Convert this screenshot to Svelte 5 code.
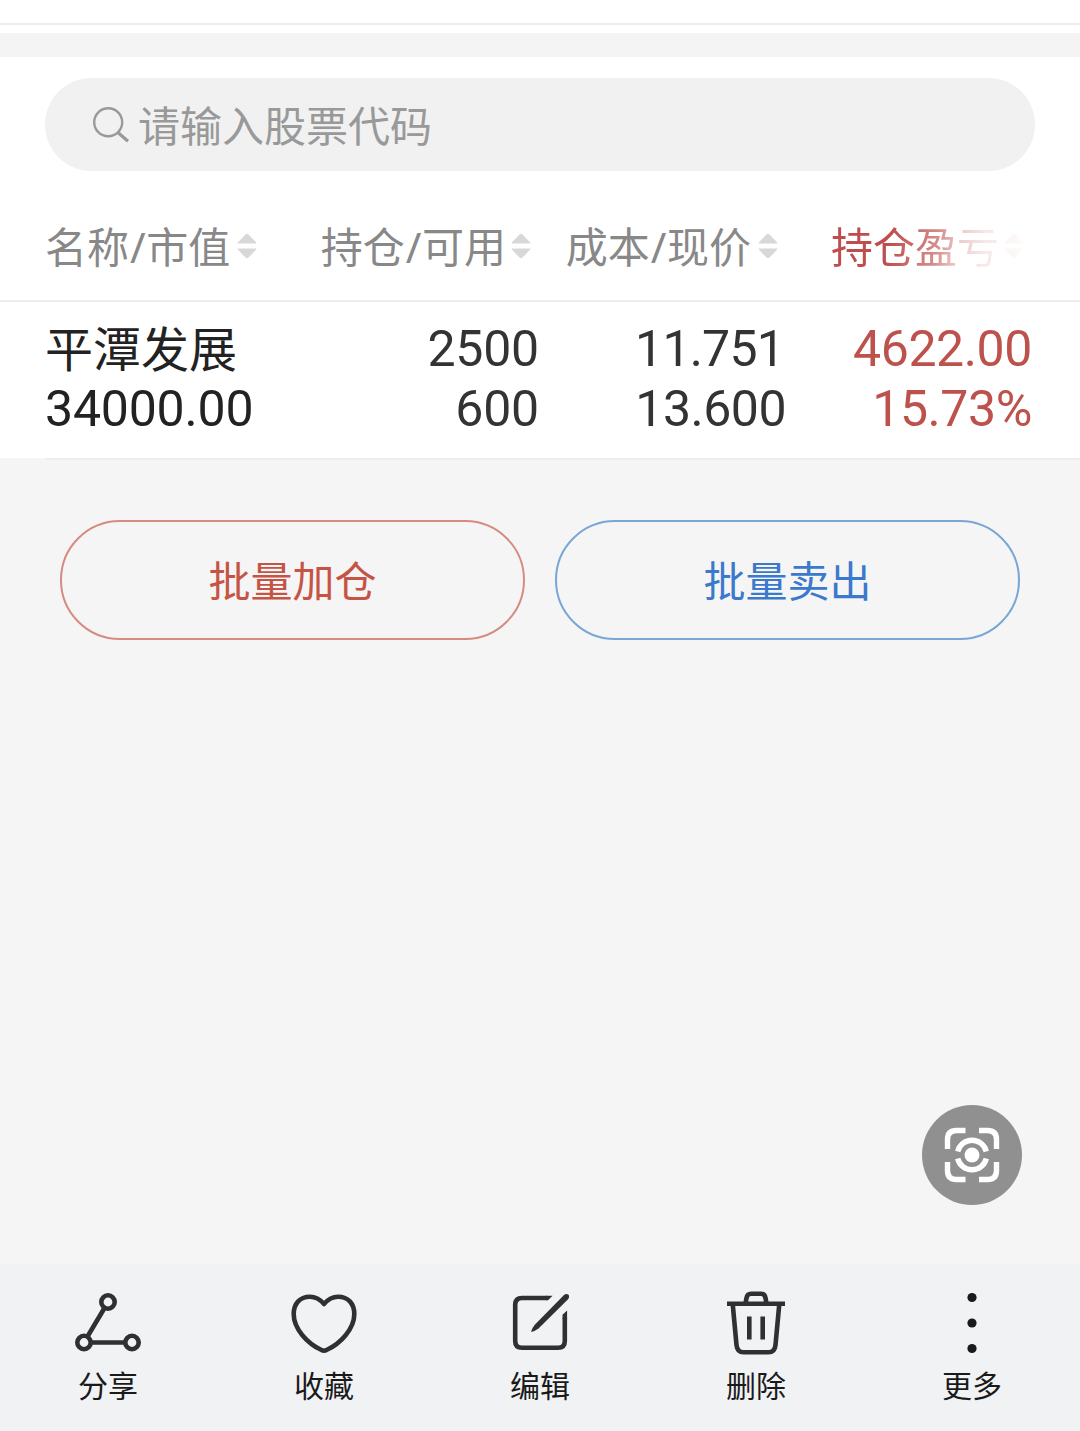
<script>
  const columns = [
    { label: ['名称', '市值'], values: ['平潭发展', '34000.00'], kind: 'name' },
    { label: ['持仓', '可用'], values: ['2500', '600'], kind: 'num' },
    { label: ['成本', '现价'], values: ['11.751', '13.600'], kind: 'num price' },
    { label: ['持仓盈亏'], values: ['4622.00', '15.73%'], kind: 'num profit' }
  ];
  const actions = [
    { id: 'share', label: '分享' },
    { id: 'like', label: '收藏' },
    { id: 'edit', label: '编辑' },
    { id: 'delete', label: '删除' },
    { id: 'more', label: '更多' }
  ];
</script>

<main>
  <div class="top"></div>
  <div class="gap"></div>

  <section class="holdings">
    <div class="search">
      <svg width="40" height="40" viewBox="0 0 40 40" fill="none" stroke="#999" stroke-width="2.4">
        <circle cx="17.2" cy="17.3" r="14" />
        <path d="M27.5 28l9.500 8.300" stroke-width="3.2" />
      </svg>
      <span>请输入股票代码</span>
    </div>

    <div class="grid head">
      {#each columns as col}
        <div class="cell {col.kind}">
          <span class="label">{col.label[0]}{#if col.label[1]}<span class="slash">/</span>{col.label[1]}{/if}</span>
          <svg class="sort" width="20" height="26" viewBox="0 0 20 26" fill="#d8d8d8">
            <path d="M1 10.5Q0 10.2 1 9.2L8.500 1.400Q10 0 11.500 1.400L19 9.200Q20 10.200 19 10.500Z" />
            <path d="M1 15.500Q0 15.800 1 16.800L8.500 24.600Q10 26 11.500 24.600L19 16.800Q20 15.800 19 15.500Z" />
          </svg>
        </div>
      {/each}
    </div>

    <div class="grid row">
      {#each columns as col}
        <div class="cell {col.kind}">
          {#each col.values as v}
            <div class="value">{v}</div>
          {/each}
        </div>
      {/each}
    </div>
  </section>
  <div class="divider"></div>

  <section class="batch">
    <button class="buy">批量加仓</button>
    <button class="sell">批量卖出</button>
  </section>

  <div class="fab">
    <svg width="100" height="100" viewBox="0 0 100 100" fill="none" stroke="#fff" stroke-width="5.400">
      <path d="M25.500 44V34.500Q25.500 25.500 34.500 25.500H43.500M57 25.500H65.500Q74.500 25.500 74.500 34.500V44M74.500 57V65.500Q74.500 74.500 65.500 74.500H57M43.500 74.500H34.500Q25.500 74.500 25.500 65.500V57" />
      <path d="M35.700 46.500A14.700 14.700 0 0 1 64.300 46.500M35.700 53.500A14.700 14.700 0 0 0 64.300 53.500" />
      <circle cx="50" cy="50" r="7.500" fill="#fff" stroke="none" />
    </svg>
  </div>

  <nav>
    {#each actions as a}
      <div class="action">
        <svg width="72" height="72" viewBox="0 0 72 72" fill="none" stroke="#303030" stroke-width="4.600">
          {#if a.id === 'share'}
            <circle cx="36" cy="15" r="6.700" />
            <circle cx="12" cy="55.500" r="6.700" />
            <circle cx="60" cy="55.500" r="6.700" />
            <path d="M32.500 21L15.500 49.500M19 55.500H53" />
          {:else if a.id === 'like'}
            <path stroke-linejoin="round" d="M36 17C32.500 13 28 9.800 22 9.800C11.500 9.800 5.700 17 5.700 27C5.700 42 19.500 56.500 33.500 63Q36 64.500 38.500 63C52.500 56.500 66.300 42 66.300 27C66.300 17 60.500 9.800 50 9.800C44 9.800 39.500 13 36 17Z" />
          {:else if a.id === 'edit'}
            <path d="M43 11H18Q11.200 11 11.200 17.800V54Q11.200 60.800 18 60.800H54Q60.800 60.800 60.800 54V31" />
            <path d="M42 8.700H48.500L44 13.300H42ZM58.500 32V27.800L63.100 23.500V32Z" fill="#303030" stroke="none" />
            <path d="M27 45Q27.500 41.500 31 37.500L60 8Q62.500 6 64.500 7.800Q66 10 63.800 12.500L34.500 41.500Q30.500 44.500 27 45Z" fill="#303030" stroke="none" />
          {:else if a.id === 'delete'}
            <path d="M7 16.700H65M12.700 17L16.500 58Q17.200 65.300 23.500 65.300H48.500Q54.800 65.300 55.500 58L59.300 17M25.500 16.500L26.500 11Q27.200 6.800 31 6.800H41Q44.800 6.800 45.500 11L46.500 16.500" />
            <path d="M29.300 29.500V52.500M42.700 29.500V52.500" />
          {:else}
            <g fill="#1a1a1a" stroke="none">
              <circle cx="36" cy="10.500" r="4.600" />
              <circle cx="36" cy="36" r="4.600" />
              <circle cx="36" cy="61.500" r="4.600" />
            </g>
          {/if}
        </svg>
        <span>{a.label}</span>
      </div>
    {/each}
  </nav>
</main>

<style>
  :global(body) { margin: 0; background: #f5f5f5; }
  main {
    position: relative;
    box-sizing: border-box;
    width: 1080px;
    height: 1431px;
    display: flex;
    flex-direction: column;
    overflow: hidden;
    background: #f5f5f5;
    font-family: "Noto Sans CJK SC", sans-serif;
  }
  .top { box-sizing: border-box; height: 33px; background: #fff; flex: none; }
  .top::before { content: ""; display: block; height: 23px; border-bottom: 2px solid #ececec; }
  .gap { height: 24px; flex: none; background: #f4f4f4; }
  .holdings { box-sizing: border-box; background: #fff; padding-top: 21px; height: 401px; flex: none; }
  .search {
    box-sizing: border-box;
    height: 93px;
    margin: 0 45px;
    padding-left: 46px;
    border-radius: 47px;
    background: #f1f1f1;
    display: flex;
    align-items: center;
    color: #999;
    font-size: 42px;
    line-height: 60px;
  }
  .search span { margin-left: 7px; padding-bottom: 1px; }
  .grid { display: grid; grid-template-columns: 245px 250px 247px 248px; padding: 0 45px; }
  .head { height: 129px; border-bottom: 2px solid #ededed; }
  .head .cell {
    display: flex;
    align-items: center;
    justify-content: flex-end;
    gap: 5px;
    padding: 21px 9px 0 0;
    height: 129px;
    box-sizing: border-box;
    color: #888;
    font-size: 42px;
    white-space: nowrap;
  }
  .label { line-height: 60px; padding-bottom: 3px; }
  .slash { font-family: "Noto Sans", sans-serif; padding: 0 0.5px 0 1px; line-height: 1; }
  .head .name { justify-content: flex-start; padding-right: 0; gap: 7px; }
  .head .price { gap: 7px; }
  .head .profit {
    color: #bf4d4d;
    padding-right: 11px;
    gap: 5px;
    -webkit-mask-image: linear-gradient(100deg, #000 42%, rgba(0, 0, 0, .65) 60%, rgba(0, 0, 0, .28) 69%, rgba(0, 0, 0, .12) 78%, rgba(0, 0, 0, .1) 88%, transparent 96%);
    mask-image: linear-gradient(100deg, #000 42%, rgba(0, 0, 0, .65) 60%, rgba(0, 0, 0, .28) 69%, rgba(0, 0, 0, .12) 78%, rgba(0, 0, 0, .1) 88%, transparent 96%);
  }
  .head .profit .sort { fill: #e2a9a4; }
  .row { padding-top: 17px; }
  .row .cell { padding-right: 1px; }
  .value { height: 60px; line-height: 60px; font-family: Roboto, "Noto Sans CJK SC", sans-serif; font-size: 50px; letter-spacing: -0.2px; color: #333; text-align: right; white-space: nowrap; }
  .row .name .value { text-align: left; color: #222; }
  .row .name .value:first-child { font-size: 48px; letter-spacing: 0; line-height: 55px; font-family: "Noto Sans CJK SC", sans-serif; }
  .row .price .value:first-child { padding-right: 2px; letter-spacing: -0.8px; }
  .row .price .value { letter-spacing: -0.5px; }
  .row .profit { padding-right: 3px; }
  .row .profit .value { color: #bd514b; letter-spacing: -0.4px; }
  .divider { height: 2px; margin-left: 45px; background: #ededed; flex: none; }
  .batch { display: flex; gap: 30px; padding: 60px 60px 0; }
  button {
    flex: 1;
    height: 120px;
    padding: 0 0 2px;
    border-radius: 60px;
    border: 2px solid;
    background: transparent;
    font: 42px/60px "Noto Sans CJK SC", sans-serif;
  }
  .buy { color: #c65445; border-color: #d58b80; }
  .sell { color: #3b79cc; border-color: #78a6d6; }
  .fab { position: absolute; left: 922px; top: 1105px; width: 100px; height: 100px; border-radius: 50%; background: #909090; }
  .fab svg { display: block; }
  nav {
    margin-top: auto;
    height: 167px;
    flex: none;
    background: #f1f2f4;
    display: grid;
    grid-template-columns: repeat(5, 1fr);
  }
  .action { display: flex; flex-direction: column; align-items: center; padding-top: 23px; }
  .action span { margin-top: 3px; font-size: 30px; line-height: 44px; color: #1a1a1a; }
</style>
